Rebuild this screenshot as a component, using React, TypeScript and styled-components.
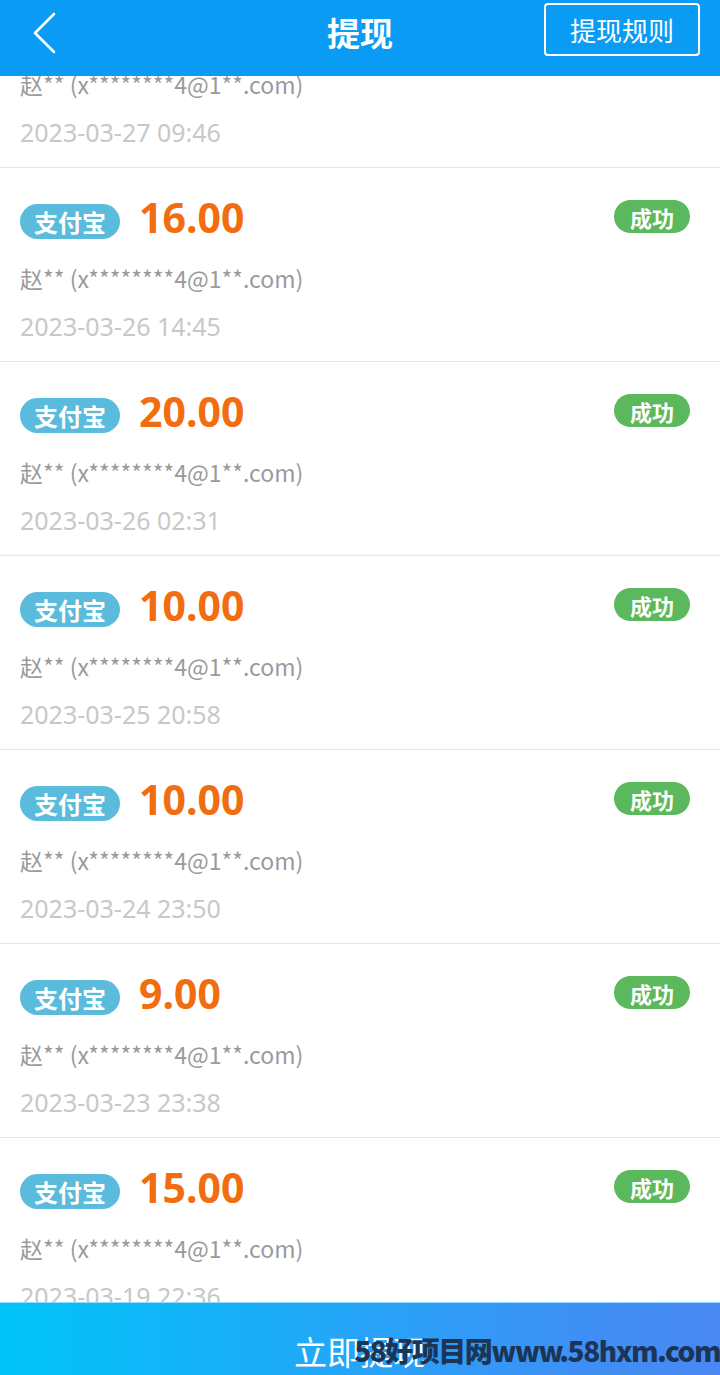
import React from "react";
import styled, { createGlobalStyle } from "styled-components";

const Global = createGlobalStyle`
  html, body { margin: 0; padding: 0; background: #fff; }
  body { font-family: "Noto Sans CJK SC", "Noto Sans", sans-serif; }
  * { box-sizing: border-box; }
`;

const Page = styled.div`
  width: 720px;
  display: flex;
  flex-direction: column;
  position: relative;
`;

const Header = styled.header`
  height: 76px;
  background: #0a9bf5;
  display: grid;
  grid-template-columns: 1fr auto 1fr;
  align-items: center;
  padding: 0 20px;
  position: relative;
  z-index: 2;
`;

const Back = styled.div`
  display: flex;
  align-items: center;
  height: 76px;
  margin-top: -10px;
  padding-left: 10px;
`;

const Title = styled.h1`
  margin: 0;
  margin-top: -12px;
  color: #fff;
  font-size: 33px;
  font-weight: 700;
`;

const RulesButton = styled.div`
  justify-self: end;
  align-self: start;
  margin-top: 3px;
  height: 53px;
  padding: 0 24px;
  border: 2px solid #fff;
  border-radius: 4px;
  color: #fff;
  font-size: 26px;
  display: flex;
  align-items: center;
`;

const ListArea = styled.div`
  height: 1226px;
  overflow: hidden;
`;

const List = styled.ul`
  list-style: none;
  margin: -102px 0 0;
  padding: 0;
`;

const Item = styled.li`
  padding: 32px 30px 15px 20px;
  border-bottom: 1px solid #e6e6e6;
`;

const TopRow = styled.div`
  display: flex;
  align-items: flex-start;
  height: 44px;
  margin-bottom: 14px;
`;

const Channel = styled.span`
  height: 35px;
  margin-top: 4px;
  padding: 0 14px;
  border-radius: 18px;
  background: #5bbbdc;
  color: #fff;
  font-size: 24px;
  font-weight: 700;
  display: flex;
  align-items: center;
`;

const Amount = styled.span`
  margin-left: 19px;
  margin-top: -5px;
  color: #f26c10;
  font-family: "Noto Sans", "Noto Sans CJK SC", sans-serif;
  font-size: 41px;
  font-weight: 700;
  line-height: 44px;
`;

const Status = styled.span`
  margin-left: auto;
  height: 33px;
  padding: 0 16px;
  border-radius: 17px;
  background: #5cb85c;
  color: #fff;
  font-size: 22px;
  font-weight: 700;
  display: flex;
  align-items: center;
`;

const Account = styled.div`
  color: #9a9a9a;
  font-size: 23px;
  line-height: 40px;
`;

const DateText = styled.div`
  margin-top: 8px;
  color: #c8c8c8;
  font-family: "Noto Sans", sans-serif;
  font-size: 25px;
  line-height: 40px;
`;

const Footer = styled.div`
  height: 96px;
  background: linear-gradient(90deg, #00c4f9 0%, #1aaef8 35%, #3d90f5 80%, #4a88f4 100%);
  border-top: 1px solid #8fe0fb;
  display: flex;
  align-items: center;
  justify-content: center;
  color: #fff;
  font-size: 33px;
  position: relative;
`;

const Watermark = styled.div`
  position: absolute;
  right: 0;
  top: 33px;
  color: #1c3557;
  font-size: 28px;
  font-weight: 900;
  letter-spacing: -1.5px;
  white-space: nowrap;
  line-height: 1;
`;

const records = [
  { amount: "10.00", date: "2023-03-27 09:46" },
  { amount: "16.00", date: "2023-03-26 14:45" },
  { amount: "20.00", date: "2023-03-26 02:31" },
  { amount: "10.00", date: "2023-03-25 20:58" },
  { amount: "10.00", date: "2023-03-24 23:50" },
  { amount: "9.00", date: "2023-03-23 23:38" },
  { amount: "15.00", date: "2023-03-19 22:36" },
];

export default function App() {
  return (
    <Page>
      <Global />
      <Header>
        <Back>
          <svg width="28" height="44" viewBox="0 0 28 44">
            <polyline points="24,3 5,22 24,41" fill="none" stroke="#fff" strokeWidth="2.6" strokeLinecap="round" strokeLinejoin="round" />
          </svg>
        </Back>
        <Title>提现</Title>
        <RulesButton>提现规则</RulesButton>
      </Header>
      <ListArea>
        <List>
          {records.map((r, i) => (
            <Item key={i}>
              <TopRow>
                <Channel>支付宝</Channel>
                <Amount>{r.amount}</Amount>
                <Status>成功</Status>
              </TopRow>
              <Account>赵** (x********4@1**.com)</Account>
              <DateText>{r.date}</DateText>
            </Item>
          ))}
        </List>
      </ListArea>
      <Footer>
        立即提现
        <Watermark>58好项目网www.58hxm.com</Watermark>
      </Footer>
    </Page>
  );
}
